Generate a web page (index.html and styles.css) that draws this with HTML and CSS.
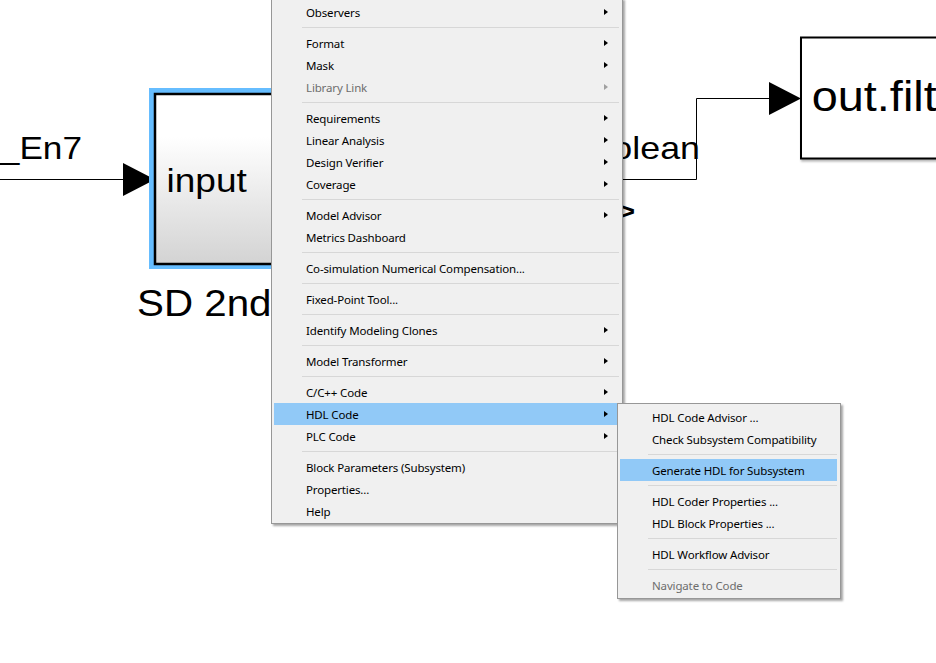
FILE: index.html
```html
<!DOCTYPE html>
<html>
<head>
<meta charset="utf-8">
<link rel="stylesheet" href="styles.css">
</head>
<body>
<div class="canvas">
  <svg class="diagram" width="936" height="663" viewBox="0 0 936 663">
    <defs>
      <linearGradient id="blockFill" x1="0" y1="0" x2="0" y2="1">
        <stop offset="0" stop-color="#ffffff"/>
        <stop offset="0.25" stop-color="#ffffff"/>
        <stop offset="1" stop-color="#d3d3d3"/>
      </linearGradient>
      <filter id="blockShadow" x="-10%" y="-10%" width="130%" height="130%">
        <feDropShadow dx="1" dy="2" stdDeviation="1.2" flood-color="#000" flood-opacity="0.3"/>
      </filter>
    </defs>
    <!-- input signal -->
    <line class="wire" x1="0" y1="179.5" x2="125" y2="179.5"/>
    <polygon class="arrowhead" points="123,163 155,179.5 123,196"/>
    <g transform="translate(82 159) scale(1.1 1)">
      <text class="sig-label" x="0" y="0" text-anchor="end">_En7</text>
    </g>
    <!-- subsystem block (selected) -->
    <rect class="selection" x="149" y="88" width="260" height="181"/>
    <rect class="block" x="155" y="94" width="250" height="170" fill="url(#blockFill)"/>
    <g transform="translate(166.5 192) scale(1.09 1)">
      <text class="port-label" x="0" y="0">input</text>
    </g>
    <g transform="translate(137 316) scale(1.09 1)">
      <text class="block-name" x="0" y="0">SD 2nd Order</text>
    </g>
    <!-- output signal -->
    <g transform="translate(700 158.5) scale(1.12 1)">
      <text class="sig-label" x="0" y="0" text-anchor="end">boolean</text>
    </g>
    <g transform="translate(635 220) scale(1.09 1)">
      <text class="sig-type" x="0" y="0" text-anchor="end">&lt;b&gt;</text>
    </g>
    <polyline class="wire" points="560,179.5 696.5,179.5 696.5,98.5 772,98.5"/>
    <polygon class="arrowhead" points="769,82 801,98.5 769,115"/>
    <rect class="block plain" x="801" y="37.5" width="200" height="121" filter="url(#blockShadow)"/>
    <g transform="translate(811.7 111) scale(1.09 1)">
      <text class="out-label" x="0" y="0">out.filter</text>
    </g>
  </svg>

  <div class="menu main-menu">
    <div class="item sub">Observers</div>
    <div class="sep"></div>
    <div class="item sub">Format</div>
    <div class="item sub">Mask</div>
    <div class="item sub disabled">Library Link</div>
    <div class="sep"></div>
    <div class="item sub">Requirements</div>
    <div class="item sub">Linear Analysis</div>
    <div class="item sub">Design Verifier</div>
    <div class="item sub">Coverage</div>
    <div class="sep"></div>
    <div class="item sub">Model Advisor</div>
    <div class="item">Metrics Dashboard</div>
    <div class="sep"></div>
    <div class="item">Co-simulation Numerical Compensation...</div>
    <div class="sep"></div>
    <div class="item">Fixed-Point Tool...</div>
    <div class="sep"></div>
    <div class="item sub">Identify Modeling Clones</div>
    <div class="sep"></div>
    <div class="item sub">Model Transformer</div>
    <div class="sep"></div>
    <div class="item sub">C/C++ Code</div>
    <div class="item sub active">HDL Code</div>
    <div class="item sub">PLC Code</div>
    <div class="sep"></div>
    <div class="item">Block Parameters (Subsystem)</div>
    <div class="item">Properties...</div>
    <div class="item">Help</div>
  </div>

  <div class="menu sub-menu">
    <div class="item">HDL Code Advisor ...</div>
    <div class="item">Check Subsystem Compatibility</div>
    <div class="sep"></div>
    <div class="item active">Generate HDL for Subsystem</div>
    <div class="sep"></div>
    <div class="item">HDL Coder Properties ...</div>
    <div class="item">HDL Block Properties ...</div>
    <div class="sep"></div>
    <div class="item">HDL Workflow Advisor</div>
    <div class="sep"></div>
    <div class="item disabled">Navigate to Code</div>
  </div>
</div>
</body>
</html>
```

FILE: styles.css
```css
html, body {
  margin: 0;
  padding: 0;
  background: #ffffff;
  overflow: hidden;
}

.canvas {
  position: relative;
  width: 936px;
  height: 663px;
  background: #ffffff;
  overflow: hidden;
}

.diagram {
  position: absolute;
  left: 0;
  top: 0;
  display: block;
}

.wire {
  fill: none;
  stroke: #000000;
  stroke-width: 1;
}

.arrowhead {
  fill: #000000;
}

.selection {
  fill: #66bdff;
}

.block {
  stroke: #000000;
  stroke-width: 2.5;
}

.block.plain {
  fill: #ffffff;
  stroke-width: 2;
}

.sig-label,
.port-label,
.block-name,
.out-label,
.sig-type {
  font-family: "Liberation Sans", Arial, sans-serif;
  fill: #000000;
}

.sig-label {
  font-size: 32px;
}

.port-label {
  font-size: 34px;
}

.block-name {
  font-size: 37px;
}

.out-label {
  font-size: 43px;
}

.sig-type {
  font-size: 26px;
  font-weight: bold;
}

/* context menus */
.menu {
  position: absolute;
  background: #f0f0f0;
  border: 1px solid #979797;
  box-shadow: 2px 2px 2px rgba(0, 0, 0, 0.35);
  font-family: "Noto Sans", "Segoe UI", sans-serif;
  font-size: 11.5px;
  letter-spacing: -0.15px;
  color: #000000;
  display: flex;
  flex-direction: column;
}

.main-menu {
  left: 271px;
  top: -2px;
  width: 345px;
  padding: 2px 3px 1px 2px;
}

.sub-menu {
  left: 617px;
  top: 403px;
  width: 217px;
  padding: 2px 3px 2px 2px;
}

.item {
  position: relative;
  box-sizing: border-box;
  height: 22px;
  line-height: 21px;
  padding-top: 1px;
  padding-left: 32px;
  white-space: nowrap;
}

.item.active {
  background: #91c9f7;
}

.item.disabled {
  color: #6d6d6d;
}

.item.sub::after {
  content: "";
  position: absolute;
  right: 11px;
  top: 8px;
  width: 0;
  height: 0;
  border-top: 3.5px solid transparent;
  border-bottom: 3.5px solid transparent;
  border-left: 4px solid #000000;
}

.item.sub.disabled::after {
  border-left-color: #a0a0a0;
}

.sep {
  height: 9px;
  position: relative;
}

.sep::before {
  content: "";
  position: absolute;
  left: 28px;
  right: 0;
  top: 4px;
  height: 1px;
  background: #d7d7d7;
}
```
